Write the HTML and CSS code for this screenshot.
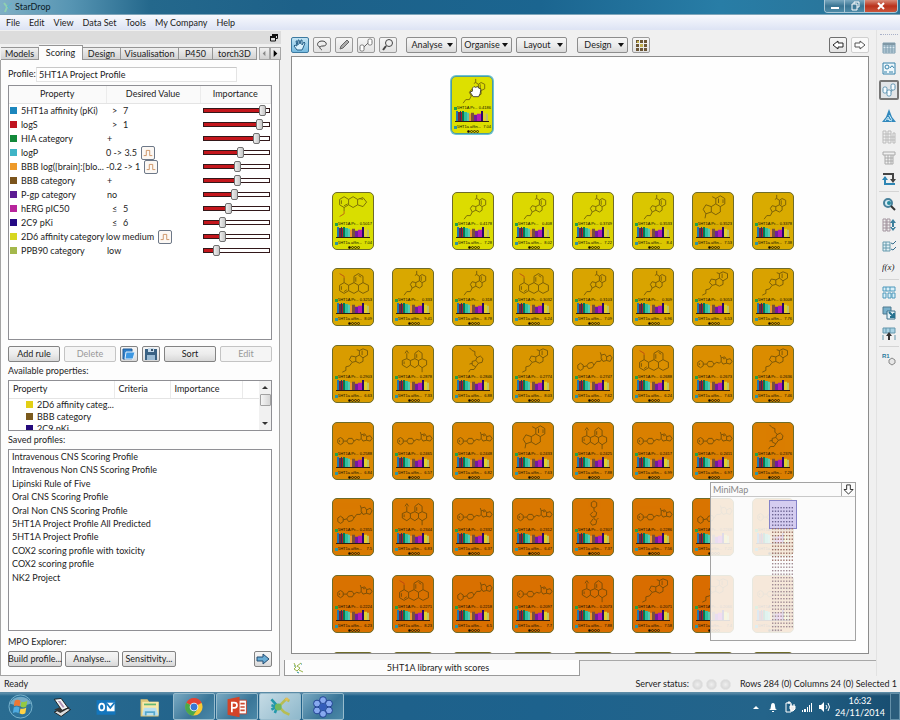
FILE: index.html
```html
<!DOCTYPE html>
<html lang="en">
<head>
<meta charset="utf-8">
<title>StarDrop</title>
<link rel="stylesheet" href="styles.css">
</head>
<body>
<svg class="defs" aria-hidden="true">
  <symbol id="mol-a" viewBox="0 0 42 30"><path d="M10 3l5 3v6l-5 3-5-3V6zM15 6l5-3 5 3v6l-5 3-5-3M25 6l6-2 4 5-4 5-6-2M7 7v4M10 13l4-2M27 5l4 1M10 15v4"/><path class="hot" d="M10 19v3l-5 3"/></symbol>
  <symbol id="mol-s" viewBox="0 0 42 30"><path d="M30 5l4 2v5l-4 2-3-2V7zM27 12l-4 2v4l4 2 3-2v-4M23 14l-4-1-2 3 2 4 4-2M29 7v5M27 7l-3-2V1M24 5l-2 1M19 20l-2 4-4 0-3 4"/></symbol>
  <symbol id="mol-c" viewBox="0 0 42 30"><path d="M31 2l5 2v5l-5 3-4-3V4zM27 9l-4 2v5l4 2 4-2v-4M23 11l-5-1-2 4 3 3 4-1M30 4v5M19 17l-3 4-4 1 0 4-4 2M27 4l-3-1"/></symbol>
  <symbol id="mol-m" viewBox="0 0 42 30"><path d="M28 2l5 3v6l-5 3-5-3V5zM23 11l-5 3v6l5 3 5-3v-6M18 14l-6-2-3 5 3 5 6-2M26 5v5M31 6v4M23 5l-4-2M12 22l-1 5"/></symbol>
  <symbol id="mol-b" viewBox="0 0 42 30"><path d="M10 14l5 3v6l-5 3-5-3v-6zM15 17l6-3 5 3v6l-5 3-6-3M26 17l5-3 6 3v6l-6 3-5-3M21 14V7l5-3 5 3v7M23 8v5M26 6l3 2M7 18v4M10 24l3-2M10 14V9"/><path class="hot" d="M10 9V7L5 4"/></symbol>
  <symbol id="mol-d" viewBox="0 0 42 30"><path d="M13 13l4 2v5l-4 3-5-3v-5zM17 15l5-2 4 2v5l-4 3-5-3M26 15l4-2 5 2v5l-5 3-4-3M22 13V7l4-3 4 3v6M24 8v4M10 16v3M13 13V7M11 7l2-3 2 3M30 23v5"/></symbol>
  <symbol id="mol-l" viewBox="0 0 42 30"><path d="M6 15l3 2v4l-3 2-3-2v-4zM9 19h4l2-3h4l2 3-2 3h-4l-2-3M21 19l3-2 3 1 2-2M29 12l4-1 2 3v4l-4 1-2-3zM35 14l4-1 2 3-2 3-4-1M29 12l-1-3M31 13l2 0M5 18v2"/></symbol>
  <symbol id="mol-u" viewBox="0 0 42 30"><path d="M6 18l3 2v4l-3 2-3-2v-4zM9 22l4-1 2-3 4-1 2 3-2 3-4 1-2-3M21 20l3-4 4 0 2-3M29 9l4-1 2 3v4l-4 1-2-3zM35 11l4-2 2 3-2 4-4-1M29 9l-1-3"/></symbol>
  <symbol id="mol-v" viewBox="0 0 42 30"><path d="M16 1l3 3 3 1v4l3 3M24 12l4-2 3 3-1 4-4 1-3-3zM23 15l-4 1v4l4 2 3-4M19 18l-3 1M23 22l-2 3-4 0-2 3"/></symbol>
  <symbol id="mol-w" viewBox="0 0 42 30"><path d="M18 3l3-2 3 2v4l-3 2-3-2zM21 9v3l3 2-1 4-4 1-2-3 3-3M21 19v2l3 2-1 4-4 1-2-3 3-4M24 22l2-2"/></symbol>
  <symbol id="chart" viewBox="0 0 34 12" preserveAspectRatio="none">
    <path fill="#1f78b0" d="M1 0h2v11H1z"/><path fill="#7c2634" d="M3 1h3v10H3z"/><path fill="#30345c" d="M5 0h1v11H5z"/><path fill="#b0142c" d="M6 1h1v10H6z"/><path fill="#087850" d="M7 0h2v11H7z"/><path fill="#30bea0" d="M9 1h3v10H9z"/><path fill="#58c7b0" d="M12 2h2v9h-2z"/><path fill="#eb9930" d="M14 3h2v8h-2z"/><path fill="#795238" d="M16 2h3v9h-3z"/><path fill="#701ba0" d="M19 4h3v7h-3z"/><path fill="#b31ab3" d="M22 3h4v8h-4z"/><path fill="#28086a" d="M26 0h2v11h-2z"/><path fill="#dfd02c" d="M28 2h3v9h-3z"/><path fill="#bac06c" d="M31 3h2v8h-2z"/><path fill="#301c10" d="M0 11h34v1H0z"/>
  </symbol>
  <symbol id="curve" viewBox="0 0 14 14"><path d="M2 10h3V4h4v6h3" fill="none" stroke="#c88a58"/></symbol>
</svg>

<div class="window">
  <header class="titlebar">
    <svg class="logo" viewBox="0 0 10 12"><path d="M1 2l3 4-2 5" stroke="#8fd0b0" fill="none" stroke-width="2"/><path d="M4 6l5-4M5 6l3 3" stroke="#5bb7d0" fill="none"/></svg>
    <span class="title">StarDrop</span>
    <div class="winbtns">
      <button aria-label="Minimise"><svg viewBox="0 0 12 10"><path d="M2 6h8v2H2z" fill="#fff"/></svg></button><button aria-label="Restore"><svg viewBox="0 0 12 10"><path d="M3 3h5v6H3zM5 3V1h5v5H8" fill="none" stroke="#fff"/></svg></button><button class="close" aria-label="Close"><svg viewBox="0 0 12 10"><path d="M3 2l6 6M9 2L3 8" stroke="#fff" stroke-width="2"/></svg></button>
    </div>
  </header>
  <nav class="menubar">
    <button>File</button><button>Edit</button><button>View</button><button>Data Set</button><button>Tools</button><button>My Company</button><button>Help</button>
  </nav>

  <div class="workspace">
    <aside class="sidebar">
      <div class="dockbar"><button aria-label="Undock"><svg viewBox="0 0 8 8"><path d="M2 0.500h5.500v4H6M0.500 3h5v4h-5z" fill="none" stroke="#111"/><path d="M2 0h6v2H2zM0 2h6v2H0z" fill="#111"/></svg></button></div>
      <div class="tabs">
        <button class="t-mod">Models</button><button class="t-sco active">Scoring</button><button class="t-des">Design</button><button class="t-vis">Visualisation</button><button class="t-p45">P450</button><button class="t-tor">torch3D</button><span class="rest"></span>
        <button class="nudge" aria-label="Previous tabs"><svg viewBox="0 0 10 12"><path d="M6 3L3 6l3 3z" fill="#888"/></svg></button><button class="nudge" aria-label="Next tabs"><svg viewBox="0 0 10 12"><path d="M3 2l4 4-4 4z" fill="#000"/></svg></button>
      </div>
      <div class="panel">
        <div class="profile"><label for="profile">Profile:</label><input id="profile" value="5HT1A Project Profile"></div>
        <div class="frame rules">
          <table>
            <thead><tr><th class="c-prop">Property</th><th class="c-val">Desired Value</th><th class="c-imp">Importance</th></tr></thead>
            <tbody id="rules"></tbody>
          </table>
        </div>
        <div class="actions">
          <button class="btn">Add rule</button><button class="btn" disabled>Delete</button>
          <button class="btn sq" aria-label="Open profile"><svg viewBox="0 0 16 14"><path d="M2 2h9v10H2z" fill="#2f7fc8" stroke="#205a96"/><path d="M5 5h9l-2 7H4z" fill="#3c97e2" stroke="#e7f2fb"/></svg></button>
          <button class="btn sq" aria-label="Save profile"><svg viewBox="0 0 16 14"><path d="M2 2h12v11H2z" fill="#3a6284"/><path d="M5 1h6v4H5z" fill="#c8dcec"/><path d="M4 8h8v5H4z" fill="#9bbbd4"/><path d="M8 2h2v2H8z" fill="#34506a"/></svg></button>
          <button class="btn">Sort</button><button class="btn" disabled>Edit</button>
        </div>
        <h2 class="avail-title">Available properties:</h2>
        <div class="frame avail">
          <table>
            <thead><tr><th class="a-prop">Property</th><th class="a-crit">Criteria</th><th class="a-imp">Importance</th><th></th></tr></thead>
            <tbody>
              <tr><td colspan="4"><i class="sw yellow"></i>2D6 affinity categ...</td></tr>
              <tr><td colspan="4"><i class="sw brown"></i>BBB category</td></tr>
              <tr><td colspan="4"><i class="sw navy"></i>2C9 pKi</td></tr>
            </tbody>
          </table>
          <div class="scroll"><svg viewBox="0 0 10 8"><path d="M2 5l3-3 3 3z" fill="#333"/></svg><i></i><svg class="down" viewBox="0 0 10 8"><path d="M2 3l3 3 3-3z" fill="#333"/></svg></div>
        </div>
        <h2 class="saved-title">Saved profiles:</h2>
        <ul class="frame saved">
          <li>Intravenous CNS Scoring Profile</li><li>Intravenous Non CNS Scoring Profile</li><li>Lipinski Rule of Five</li><li>Oral CNS Scoring Profile</li><li>Oral Non CNS Scoring Profile</li><li>5HT1A Project Profile All Predicted</li><li>5HT1A Project Profile</li><li>COX2 scoring profile with toxicity</li><li>COX2 scoring profile</li><li>NK2 Project</li>
        </ul>
        <h2 class="mpo-title">MPO Explorer:</h2>
        <div class="mpo">
          <button class="btn">Build profile...</button><button class="btn">Analyse...</button><button class="btn">Sensitivity...</button>
          <button class="btn sq go" aria-label="Run"><svg viewBox="0 0 16 14"><path d="M2 5h6V2l6 5-6 5V9H2z" fill="#69add6" stroke="#234c72"/></svg></button>
        </div>
      </div>
    </aside>

    <main class="main">
      <div class="toolbar">
        <button class="tool on" aria-label="Pan"><svg viewBox="0 0 16 14"><path d="M5 12L2 8l1-1 2 1-1-5h1l1 4V2h1l1 4 1-4h1v5l2-3 1 1-2 5-1 2z" fill="#d9f0fc" stroke="#28628a"/></svg></button>
        <button class="tool" aria-label="Lasso"><svg viewBox="0 0 16 14"><path d="M6 9C2 8 3 3 8 3s6 5 1 5-3 3-1 4" fill="none" stroke="#444"/></svg></button>
        <button class="tool" aria-label="Draw"><svg viewBox="0 0 16 14"><path d="M4 11l1-3 6-6 2 2-6 6z" fill="#aaa" stroke="#666"/></svg></button>
        <button class="tool" aria-label="Link"><svg viewBox="0 0 16 14"><path d="M6 9l4-4" stroke="#666"/><rect x="2" y="7" width="4" height="6" rx="1.500" fill="#fff" stroke="#777"/><rect x="10" y="1" width="4" height="6" rx="1.500" fill="#fff" stroke="#777"/></svg></button>
        <button class="tool" aria-label="Zoom"><svg viewBox="0 0 16 14"><circle cx="9" cy="5" r="3.500" fill="#eee" stroke="#444"/><path d="M6 8l-3 4" stroke="#444" stroke-width="2"/></svg></button>
        <button class="drop first">Analyse<i></i></button><button class="drop">Organise<i></i></button><button class="drop">Layout<i></i></button><button class="drop design">Design<i></i></button>
        <button class="tool" aria-label="Grid"><svg viewBox="0 0 16 14"><path d="M3 2h3v3H3zM7 2h3v3H7zM11 2h3v3h-3zM3 6h3v3H3zM11 6h3v3h-3zM3 10h3v3H3zM7 10h3v3H7zM11 10h3v3h-3z" fill="#6b5636"/><path d="M7 6h3v3H7zM4 3h2v2H4z" fill="#c2b04e"/></svg></button>
        <button class="tool back" aria-label="Back"><svg viewBox="0 0 16 14"><path d="M13 5H8V3L3 7l5 4V9h5z" fill="#fff" stroke="#222"/></svg></button>
        <button class="tool fwd" aria-label="Forward"><svg viewBox="0 0 16 14"><path d="M3 5h5V3l5 4-5 4V9H3z" fill="#fff" stroke="#555"/></svg></button>
      </div>
      <section class="canvas">
        <div class="picked" id="picked"></div>
        <div class="cards" id="cards"></div>
        <div class="minimap">
          <div class="mm-head"><span>MiniMap</span><button aria-label="Collapse"><svg viewBox="0 0 12 12"><path d="M4 1h4v5h3l-5 5-5-5h3z" fill="#fff" stroke="#222"/></svg></button></div>
          <div class="mm-body"><svg id="dots" class="mm-dots" viewBox="0 0 28 132"></svg></div>
        </div>
      </section>
      <div class="sheets"><button class="sheet"><svg viewBox="0 0 14 14"><path d="M3 2l2 4-2 2 3 2 3-3-3-2 4-3M8 9l4 2" fill="none" stroke="#9ab54a"/><path d="M6 11l2 1M10 3h1M3 5h1" stroke="#2b8f9a"/></svg><span>5HT1A library with scores</span></button><div class="sheet-rest"></div></div>
    </main>
    <nav class="rail" id="rail" aria-label="Views"></nav>
  </div>

  <footer class="status"><span>Ready</span><span class="server">Server status:</span><i></i><i></i><i></i><span class="count">Rows 284 (0) Columns 24 (0) Selected 1</span></footer>

  <div class="taskbar">
    <button class="start" aria-label="Start"><svg viewBox="0 0 28 28"><circle cx="14" cy="14" r="12" fill="#2d739b" stroke="#79b3cc"/><path d="M3 11a12 12 0 0 1 22 0q-11 5-22 0" fill="#73aac5"/><path d="M8 8q3-2 6 0l-1 6q-3-2-6 0z" fill="#ee7734"/><path d="M15 9q3 1 6-1l-1 6q-3 2-6 0z" fill="#94c942"/><path d="M7 15q3-2 6 0l-1 6q-3-2-6 0z" fill="#4fabe0"/><path d="M14 16q3 1 6-1l-1 6q-3 2-6 0z" fill="#ffd346"/></svg></button>
    <button aria-label="Scanner"><svg viewBox="0 0 28 28"><path d="M5 20l12-6 7 3-11 8z" fill="#ddd" stroke="#111"/><path d="M5 17l12-5 6 3-11 6z" fill="#363636"/><path d="M5 5l8-1 8 11-7 3z" fill="#f4f4f4" stroke="#111"/><path d="M9 7l3 0 5 7-2 1z" fill="#b294b6"/></svg></button>
    <button aria-label="Outlook"><svg viewBox="0 0 28 28"><rect x="3" y="6" width="22" height="17" fill="#1476bd"/><ellipse cx="9" cy="14" rx="3" ry="4" fill="none" stroke="#fff" stroke-width="2"/><path d="M15 9h9v10h-9z" fill="#fff"/><path d="M15 10l4 5 5-6" fill="none" stroke="#1476bd" stroke-width="2"/></svg></button>
    <button aria-label="Explorer"><svg viewBox="0 0 28 28"><path d="M3 5h8l2 3h11v17H3z" fill="#dec578"/><path d="M5 8h19v15H5z" fill="#f8e8a7"/><path d="M7 15h14l3 9H5z" fill="#b8dff0"/><path d="M9 24v-4h10v4" fill="none" stroke="#55a8cd" stroke-width="2"/><path d="M7 11h14" stroke="#65b774" stroke-width="2"/></svg></button>
    <button class="run" aria-label="Chrome"><svg viewBox="0 0 28 28"><circle cx="14" cy="14" r="10" fill="#f8ca35"/><path d="M14 14L5 9a10 10 0 0 1 18 0z" fill="#e34133"/><path d="M14 14l-9-5a10 10 0 0 0 8 15l5-7z" fill="#4aa84a"/><circle cx="14" cy="14" r="5" fill="#fff"/><circle cx="14" cy="14" r="4" fill="#3977d2"/></svg></button>
    <button class="run" aria-label="PowerPoint"><svg viewBox="0 0 28 28"><path d="M15 6h10v16H15z" fill="#fff" stroke="#c43d28"/><path d="M18 10h5M18 14h5M18 18h5" stroke="#d04a31" stroke-width="2"/><path d="M3 5l14-3v24L3 23z" fill="#d34428"/><path d="M8 20V9h3q3 0 3 3t-3 3H8" fill="none" stroke="#fff" stroke-width="2"/></svg></button>
    <button class="run lit" aria-label="StarDrop"><svg viewBox="0 0 28 28"><path d="M4 5l7 8-3 8M11 13l-7 4M4 12l7 2" stroke="#2298ab" stroke-width="3" fill="none"/><path d="M13 13l8-8 4 2M14 15l5 5 6 3" stroke="#b7bd52" stroke-width="3" fill="none"/><circle cx="12" cy="14" r="4" fill="#72b85e"/><circle cx="22" cy="5" r="2" fill="#e2bd5a"/></svg></button>
    <button class="run" aria-label="Flower"><svg viewBox="0 0 28 28"><g fill="#87a9ef" stroke="#17378c"><circle cx="14" cy="6" r="4"/><circle cx="21" cy="10" r="4"/><circle cx="21" cy="18" r="4"/><circle cx="14" cy="22" r="4"/><circle cx="7" cy="18" r="4"/><circle cx="7" cy="10" r="4"/></g><circle cx="14" cy="14" r="4" fill="#345dbb"/></svg></button>
    <div class="tray">
      <svg viewBox="0 0 12 12"><path d="M3 8l3-3 3 3z" fill="#fff"/></svg>
      <svg viewBox="0 0 12 12"><path d="M2 9q2-1 2-4 0-3 2-3t2 3q0 3 2 4zM5 10h2v1H5z" fill="#fff"/></svg>
      <svg viewBox="0 0 12 12"><path d="M2 2h5v9H2zM4 1h2v1H4z" fill="none" stroke="#fff"/><path d="M6 5h5v3L9 10H7V8H6zM7 3v2M10 3v2" fill="#eee" stroke="#fff"/></svg>
      <svg viewBox="0 0 12 12"><path d="M1 9h1v2H1zM3 8h2v3H3zM6 6h1v5H6zM8 4h1v7H8zM10 2h1v9h-1z" fill="#fff"/></svg>
      <svg viewBox="0 0 12 12"><path d="M1 4h2l3-3v10L3 8H1z" fill="#fff"/><path d="M8 4q2 2 0 4M10 2q3 4 0 8" fill="none" stroke="#fff"/></svg>
      <div class="clock"><span>16:32</span><span>24/11/2014</span></div>
      <button class="peek" aria-label="Show desktop"></button>
    </div>
  </div>
</div>
<script src="app.js"></script>
</body>
</html>
```
FILE: styles.css
```css
* { box-sizing: border-box; }
body { margin: 0; font-family: Lato, "Open Sans", sans-serif; font-size: 9px; line-height: 12px; color: #1c1c1c; background: #f0f0f0; }
button, input { font: inherit; color: inherit; margin: 0; padding: 0; border: 0; background: none; border-radius: 0; }
button { display: flex; align-items: center; justify-content: center; white-space: nowrap; }
svg { display: block; flex: none; }
h2 { margin: 0; font-size: 9px; font-weight: 400; }
.defs { position: absolute; width: 0; height: 0; }
.window { display: flex; flex-direction: column; height: 100vh; overflow: hidden; }

.titlebar { display: flex; align-items: center; height: 15px; flex: none; padding-left: 3px; background: linear-gradient(90deg, #7fb0c6 0, #5795b3 70px, #24688c 150px, #1d6189 300px, #1b6590 60%, #287da6 80%, #2a7296 100%); border-bottom: 1px solid #7fa6bb; }
.logo { width: 10px; height: 12px; }
.title { margin-left: 2px; color: #0c1c28; }
.winbtns { display: flex; align-self: flex-start; margin-left: auto; margin-right: 2px; border: 1px solid #a9c7d6; border-top: 0; border-radius: 0 0 4px 4px; overflow: hidden; }
.winbtns button { width: 20px; height: 12px; background: linear-gradient(#7ba9c0, #3a7593 50%, #4e8ba8); border-right: 1px solid #a9c7d6; }
.winbtns .close { width: 32px; border: 0; background: linear-gradient(#d98b78, #b9321c 50%, #cb563c); }
.winbtns svg { width: 12px; height: 10px; }
.menubar { display: flex; align-items: center; gap: 9px; height: 15px; flex: none; padding-left: 6px; background: linear-gradient(#f7f9fd, #dde3f4); }

.workspace { display: flex; flex: 1; min-height: 0; }
.sidebar { display: flex; flex-direction: column; width: 281px; flex: none; }
.dockbar { height: 13px; margin-top: 1px; flex: none; background: #dcdcdc; display: flex; align-items: center; justify-content: flex-end; padding-right: 3px; }
.dockbar svg { width: 8px; height: 8px; }
.tabs { display: flex; align-items: flex-end; height: 16px; flex: none; padding-left: 1px; }
.tabs button { height: 13px; background: linear-gradient(#f0f0f0, #d2d2d2); border: 1px solid #959595; border-left-width: 0; }
.tabs .active { height: 15px; background: #fdfdfd; border-bottom: 0; }
.tabs .t-mod { width: 38px; }
.tabs .t-sco { width: 44px; }
.tabs .t-des { width: 38px; }
.tabs .t-vis { width: 58px; }
.tabs .t-p45 { width: 34px; }
.tabs .t-tor { width: 44px; }
.rest { flex: 1; }
.tabs .nudge { width: 11px; border: 1px solid #a6a6a6; }
.nudge svg { width: 9px; height: 11px; }
.panel { flex: 1; min-height: 0; display: flex; flex-direction: column; margin-right: 1px; padding: 6px 7px 8px 7px; background: #fdfdfd; border: 1px solid #a4a4a4; border-top: 0; }
.profile { display: flex; align-items: center; height: 16px; flex: none; }
.profile label { width: 28px; }
.profile input { width: 201px; height: 15px; padding-left: 2px; border: 1px solid #e4e4e4; border-top-color: #c8c8c8; background: #fff; }
.frame { border: 1px solid #8f8f94; background: #fff; }
table { border-collapse: collapse; table-layout: fixed; width: 100%; }
th { font-weight: 400; padding: 0; }
td { padding: 0; white-space: nowrap; }
.rules { height: 255px; flex: none; margin-top: 3px; overflow: hidden; }
.rules th { height: 17px; background: #fafafa; border-right: 1px solid #ececec; border-bottom: 1px solid #e4e4e4; }
.rules td { height: 14px; line-height: 13px; }
.rules .c-prop { width: 97px; }
.rules .c-val { width: 94px; }
.prop, .val { display: flex; align-items: center; height: 14px; }
.sw { display: inline-block; width: 7px; height: 7px; flex: none; }
.prop .sw { margin: 0 4px 0 1px; }
.val.word { padding-left: 1px; }
.val .op { width: 16px; padding-left: 5px; }
.val button { width: 14px; height: 14px; margin-left: 4px; border: 1px solid #6d7888; border-radius: 2px; background: #fcf8f4; }
.val button svg { width: 12px; height: 12px; }
input[type=range] { appearance: none; -webkit-appearance: none; display: block; width: 67px; height: 14px; margin-left: 3px; }
input[type=range]::-webkit-slider-runnable-track { height: 5px; border: 1px solid #33181a; background: linear-gradient(90deg, #c4161c var(--v), #fff var(--v)); }
input[type=range]::-webkit-slider-thumb { -webkit-appearance: none; width: 7px; height: 11px; margin-top: -4px; border: 1px solid #727272; border-radius: 2px; background: linear-gradient(90deg, #eee, #c6c6c6); }
.actions { display: flex; justify-content: space-between; margin-top: 6px; flex: none; }
.btn { width: 52px; height: 16px; border: 1px solid #838383; border-radius: 2px; background: linear-gradient(#f5f5f5, #ececec 50%, #d8d8d8); }
.btn:disabled { color: #999; border-color: #c4c4c4; background: #f5f5f5; }
.btn.sq { width: 18px; }
.btn.sq svg { width: 16px; height: 14px; }
.avail-title { margin-top: 3px; }
.avail { position: relative; height: 51px; flex: none; margin-top: 3px; overflow: hidden; }
.avail th { height: 17px; text-align: left; padding-left: 4px; border-right: 1px solid #eaeaea; border-bottom: 1px solid #e4e4e4; }
.a-prop { width: 105px; }
.a-crit { width: 56px; }
.a-imp { width: 72px; }
.avail td { height: 12px; line-height: 12px; padding-left: 17px; }
.avail .sw { margin-right: 4px; }
.yellow { background: #e2cf15; }
.brown { background: #7b5a1d; }
.navy { background: #250a7c; }
.scroll { position: absolute; right: 0; top: 0; bottom: 0; width: 12px; display: flex; flex-direction: column; align-items: center; background: #f1f1f1; padding: 3px 0; }
.scroll svg { width: 10px; height: 8px; }
.scroll i { width: 11px; height: 12px; margin-top: 2px; border: 1px solid #a2a2a2; border-radius: 1px; background: linear-gradient(90deg, #f5f5f5, #d6d6d6); }
.scroll .down { margin-top: auto; }
.saved-title { margin-top: 3px; }
.saved { flex: 1; min-height: 0; margin: 3px 0 0; padding: 0 3px; list-style: none; display: grid; grid-auto-rows: 13px 14px 13px 14px 13px; align-items: center; align-content: start; }
.mpo-title { margin-top: 5px; }
.mpo { display: flex; gap: 3px; margin-top: 3px; flex: none; }
.mpo .btn { width: 54px; }
.mpo .go { width: 18px; margin-left: auto; }

.main { flex: 1; min-width: 0; display: flex; flex-direction: column; padding-left: 3px; }
.toolbar { display: flex; align-items: center; gap: 4px; height: 26px; flex: none; padding: 4px 7px 0; }
.tool { width: 18px; height: 16px; border: 1px solid #9a9a9a; border-radius: 2px; background: linear-gradient(#f6f6f6, #e2e2e2); }
.tool svg { width: 16px; height: 14px; }
.tool.on { border-color: #3d7aa0; background: linear-gradient(#c3e4f4, #77bbe0); }
.tool.back { margin-left: auto; border-color: #6f6f6f; }
.tool.fwd { background: #fafafa; border-color: #cfcfcf; }
.drop { position: relative; width: 51px; height: 16px; padding-right: 9px; border: 1px solid #8d8d8d; border-radius: 2px; background: linear-gradient(#f6f6f6, #ececec 50%, #dadada); }
.drop i { position: absolute; right: 3px; top: 5px; border: 3px solid transparent; border-top: 4px solid #111; border-bottom: 0; }
.drop.first { margin-left: 5px; }
.drop.design { margin-left: 6px; }
.canvas { position: relative; flex: 1; min-height: 0; overflow: hidden; margin: 0 7px; padding: 19px 0 0 40px; background: #fefefe; border: 1px solid #8c8c8c; }
.picked { margin-left: 119px; height: 116px; }
.cards { display: grid; grid-template-columns: repeat(8, 42px); column-gap: 18px; grid-auto-rows: 76px 77px 77px; }
.card { width: 42px; height: 58px; padding: 1px 1px 0 2px; border: 1px solid #6e6c2a; border-radius: 5px; overflow: hidden; background: #d98400; }
.picked .card { border-color: #4f9aa0; box-shadow: 0 0 0 1px #6cc3d2; }
.mol { width: 38px; height: 27px; fill: none; stroke: #50400c; stroke-width: 1; opacity: .75; }
.hot { stroke: #b03418; }
.line { display: flex; align-items: center; height: 6px; font: 4px/6px "Liberation Sans", sans-serif; color: #0c0a04; white-space: nowrap; }
.line i { flex: none; width: 3px; height: 3px; background: #26a048; }
.line.aff i { background: #2d94a2; }
.line b { font-weight: 400; margin-left: auto; }
.bars { width: 34px; height: 11px; margin: 0 0 2px 1px; }
.pips { display: flex; justify-content: center; height: 3px; }
.pips i { width: 3px; height: 3px; border: 1px solid #3b2a08; border-radius: 50%; }
.pips i:first-child { background: #150a02; }
.hand { position: absolute; left: 177px; top: 28px; width: 13px; height: 14px; }
.minimap { position: absolute; right: 12px; bottom: 12px; width: 146px; height: 159px; border: 1px solid #a3a3a3; background: rgba(250, 250, 250, .87); }
.mm-head { display: flex; align-items: center; height: 14px; padding-left: 2px; color: #888; border-bottom: 1px solid #c8c8c8; }
.mm-head button { margin-left: auto; width: 14px; height: 13px; border-left: 1px solid #a8a8a8; }
.mm-head svg { width: 11px; height: 11px; }
.mm-body { display: flex; justify-content: center; padding: 3px 0 0 0; }
.mm-dots { width: 28px; height: 132px; }
.sheets { display: flex; height: 22px; flex: none; padding-top: 6px; }
.sheet { width: 296px; height: 16px; padding-left: 6px; background: #fdfdfd; border: 1px solid #9a9a9a; border-top: 0; }
.sheet svg { width: 14px; height: 14px; }
.sheet span { flex: 1; text-align: center; padding-right: 8px; }
.sheet-rest { flex: 1; border-top: 1px solid #a8a8a8; }
.rail { width: 24px; flex: none; display: flex; flex-direction: column; align-items: center; gap: 1px; padding-top: 4px; border-left: 1px solid #e2e2e2; }
.rail::before { content: ""; width: 18px; height: 2px; border-top: 1px dotted #a8b0c8; }
.rail button { width: 20px; height: 20px; border-radius: 2px; }
.rail button.on { border: 2px solid #777; background: #e2e5e8; }
.rail svg { width: 14px; height: 14px; }
.rail hr { width: 20px; height: 2px; margin: 1px 0 0; border: 0; border-top: 1px solid #d4d4d4; }
.rail hr.blank { border-color: transparent; height: 3px; }

.status { display: flex; align-items: center; gap: 3px; height: 16px; flex: none; padding: 0 3px 0 4px; }
.server { margin-left: auto; }
.status i { width: 11px; height: 11px; border-radius: 50%; background: radial-gradient(#efefef, #cfcfcf); border: 1px solid #e2e2e2; }
.count { margin-left: 6px; }
.taskbar { display: flex; align-items: stretch; height: 28px; flex: none; background: linear-gradient(rgba(255,255,255,.25), transparent 3px), linear-gradient(90deg, #2a6c91, #1f6089 30%, #1d628d 60%, #24648a 85%, #174d70); border-top: 1px solid #5a8aa5; }
.taskbar button { width: 44px; }
.taskbar .start { width: 40px; }
.taskbar svg { width: 24px; height: 24px; }
.start svg { width: 27px; height: 27px; }
.taskbar .run { width: 42px; margin-left: 1px; border: 1px solid #98bccd; border-radius: 2px; background: linear-gradient(135deg, #79a9c2, #3a7698 60%, #4b88a8); }
.taskbar .lit { background: linear-gradient(135deg, #c5dbe5, #8eb8cb); }
.taskbar .tray { display: flex; align-items: center; gap: 5px; margin-left: auto; color: #fff; }
.taskbar .tray svg { width: 12px; height: 12px; }
.clock { display: flex; flex-direction: column; align-items: center; width: 50px; }
.taskbar .peek { width: 10px; height: 27px; border: 1px solid #6490a8; background: #2b5d7c; }
```
FILE: app.js
```js
const rules = [
  ["#1c86bd", "5HT1a affinity (pKi)", [">", "7"], 0, 94],
  ["#c01420", "logS", [">", "1"], 0, 89],
  ["#12893a", "HIA category", "+", 0, 84],
  ["#3fb4c6", "logP", "0 -> 3.5", 1, 57],
  ["#ee9a2a", "BBB log([brain]:[blo...", "-0.2 -> 1", 1, 51],
  ["#7b541c", "BBB category", "+", 0, 51],
  ["#5c1b92", "P-gp category", "no", 0, 47],
  ["#b8249c", "hERG pIC50", ["≤", "5"], 0, 36],
  ["#250a84", "2C9 pKi", ["≤", "6"], 0, 26],
  ["#d7d720", "2D6 affinity category", "low medium", 1, 26],
  ["#a4b84c", "PPB90 category", "low", 0, 16]
];
document.getElementById("rules").innerHTML = rules.map(([color, name, value, curve, level]) => {
  const text = Array.isArray(value) ? `<span class="op">${value[0]}</span>${value[1]}` : value;
  const button = curve ? `<button aria-label="Edit ${name} curve"><svg><use href="#curve"/></svg></button>` : "";
  return `<tr><td><div class="prop"><i class="sw" style="background:${color}"></i>${name}</div></td>
    <td><div class="val${curve ? "" : " word"}">${text}${button}</div></td>
    <td><input type="range" value="${level}" style="--v:${level}%" aria-label="${name} importance"></td></tr>`;
}).join("");

const card = ([mol, color, score, affinity]) => mol === "-" ? "<span></span>" :
  mol === "edge" ? `<article class="card" style="background:${color}"></article>` :
  `<article class="card" style="background:${color}"><svg class="mol"><use href="#mol-${mol}"/></svg>
  <div class="line"><i></i>5HT1A Pr...<b>0${score}</b></div><svg class="bars"><use href="#chart"/></svg>
  <div class="line aff"><i></i>5HT1a affin...<b>${affinity}</b></div><div class="pips"><i></i><i></i><i></i><i></i></div></article>`;

const rows = [
  [["a","#d9de00",".5017","7.04"],["-"],["s","#dcdc00",".4178","7.28"],["s","#dcd800",".408","8.02"],["s","#dcd200",".3749","7.22"],["s","#dac600",".3533","8.4"],["m","#d9ab00",".3523","7.53"],["s","#d9ab00",".3378","7.38"]],
  [["b","#d9a800",".3253","8.09"],["s","#d9a800",".333","9.41"],["s","#d9a600",".318","8.78"],["b","#d9a600",".3032","6.24"],["s","#d9a400",".3103","7.09"],["s","#d9a400",".309","6.96"],["c","#d9a200",".3053","6.53"],["c","#d9a200",".3008","7.76"]],
  [["c","#d99c00",".2903","6.63"],["d","#d99a00",".2878","7.33"],["v","#d99800",".2846","6.88"],["c","#d99600",".2774","8.03"],["u","#db9000",".2747","7.62"],["b","#db9000",".2688","6.24"],["l","#db8e00",".2673","7.63"],["c","#db8c00",".2636","7.46"]],
  [["l","#da8800",".2588","6.84"],["l","#da8600",".2465","6.57"],["l","#da8400",".2448","6.82"],["m","#da8200",".2433","7.63"],["d","#da8000",".2425","7.88"],["l","#da8000",".2417","6.99"],["l","#da7e00",".2411","6.97"],["v","#da7e00",".2376","7.28"]],
  [["u","#d97a00",".2355","7.5"],["d","#d97900",".2344","6.83"],["l","#d97800",".2332","6.37"],["l","#d97700",".2312","6.47"],["w","#d97600",".2307","7.37"],["l","#d97500",".2286","7.56"],["u","#d97400",".2268","7.22"],["l","#d97400",".2255","6.9"]],
  [["l","#d97200",".2224","6.23"],["b","#d97200",".2271","8.23"],["u","#d97000",".2218","6.5"],["l","#d97000",".2097","7.7"],["d","#d96e00",".2073","7.88"],["c","#d96e00",".2071","7.58"],["c","#d96c00",".2066","7.4"],["l","#d96c00",".2041","7.1"]],
  Array.from({ length: 8 }, () => ["edge", "#c86408"])
];
document.getElementById("cards").innerHTML = rows.flat().map(card).join("");
document.getElementById("picked").innerHTML = card(["s", "#dde000", ".4186", "7.04"]) +
  `<svg class="hand" viewBox="0 0 16 18"><path d="M5 15L1 9l3-1V4l2-2 2 1 3-1 1 2 3 1-1 6-2 4z" fill="#fff" stroke="#222"/></svg>`;

let dots = '<rect x=".5" y=".5" width="27" height="28" fill="#d5cdf0" stroke="#8482c8"/>';
for (let r = 0; r < 36; r++) {
  for (let c = 0; c < (r === 35 ? 4 : 8); c++) {
    const color = r < 6 ? "#6c6392" : r < 16 ? "#9a6e64" : "#a08a92";
    dots += `<rect x="${3 + c * 2.8}" y="${7 + r * 3.5}" width="1.4" height="1.4" fill="${color}"/>`;
  }
}
document.getElementById("dots").innerHTML = dots;

const grid = '<path d="M1 2h12v10H1zM1 5h12M4 2v10M7 2v10M10 2v10M1 8h12M1 10h12"';
const railIcons = [
  ["Table", `${grid} fill="#dceaf2" stroke="#7c9cae"/><path d="M1 2h12v2H1z" fill="#7f98a6"/>`],
  ["Plots", '<path d="M1 1h12v11H1z" fill="#eef7fb" stroke="#3682aa"/><circle cx="5" cy="5" r="2" fill="none" stroke="#3682aa"/><path d="M8 6q2-4 4 0M2 10h3M7 10h4" fill="none" stroke="#3682aa"/>'],
  ["Cards", '<path d="M8 10l3-4" stroke="#4c87a7"/><g fill="#f6fbff" stroke="#5b93b1"><rect x="1" y="4" width="4" height="6" rx="1.500"/><rect x="5" y="7" width="4" height="6" rx="1.500"/><rect x="9" y="1" width="4" height="6" rx="1.500"/></g>', "on"],
  null,
  ["Distribution", '<path d="M7 0L4 8l-4 5h14l-4-5z" fill="#3289bd"/><path d="M3 12l3-4 2 4M7 6l3 5M5 10l5 2" stroke="#c9e9f6" fill="none"/>'],
  ["Columns", '<path d="M1 1h3v12H1zM6 1h3v12H6zM11 3h2v10h-2zM1 4h8M1 7h12M1 10h12" fill="none" stroke="#bbb"/>'],
  ["Header", '<path d="M1 1h12v3H1zM3 4v9h8V4M6 4v9M9 4v9M3 7h8M3 10h8" fill="none" stroke="#aaa"/>'],
  ["Transpose", '<path d="M1 2h10v6" fill="none" stroke="#444" stroke-width="2"/><path d="M3 5v7h10" fill="none" stroke="#2e86b4" stroke-width="2"/><path d="M0 8l3-4 3 4z" fill="#2e86b4"/><path d="M8 7h6l-3 4z" fill="#444"/>'],
  0,
  ["Find", '<circle cx="6" cy="6" r="4" fill="#d7edf5" stroke="#48819b" stroke-width="2"/><circle cx="7" cy="6" r="2" fill="#278a9e"/><path d="M9 9l4 4" stroke="#333" stroke-width="2"/>'],
  ["Sort", '<path d="M1 1h3v12H1zM5 1h3v12H5zM1 4h7M1 7h7M1 10h7" fill="none" stroke="#a2949e"/><path d="M11 1l3 4H8zM11 13l3-4H8zM10 4h2v6h-2z" fill="#3c7f9c"/>'],
  ["Check", '<path d="M1 3h7v9H1zM1 6h7M1 9h7M4 3v9" fill="#e2f1f6" stroke="#679aad"/><path d="M9 4l2 1 3-3M9 10l2 1 3-3" fill="none" stroke="#336c8c"/>'],
  ["Function", '<text x="0" y="10" font-family="Liberation Serif" font-style="italic" font-size="9" fill="#222">f(x)</text>'],
  0,
  ["Merge", '<path d="M1 2h12v4H1zM1 8h3v5H1zM6 8h3v5H6zM10 8h3v5h-3zM4 2v4M8 2v4" fill="#d9eff8" stroke="#4d98bb"/>'],
  ["Copy", '<path d="M1 1h8v7H1z" fill="#78b0cb" stroke="#507b90"/><path d="M5 5h8v8H5z" fill="#e4f2f7" stroke="#3d718a"/><path d="M7 6l5 5M8 11h4V7" stroke="#26718f" fill="none" stroke-width="2"/>'],
  ["Split", '<path d="M1 1h12v5H1zM4 1v5M8 1v5M1 8v5M13 8v5" fill="#a8d2e4" stroke="#6497ac"/><path d="M7 5l3 4H8v4H6V9H4z" fill="#333"/>'],
  0,
  ["R-groups", '<text x="0" y="6" font-family="Liberation Sans" font-weight="bold" font-size="6" fill="#2b7b9d">R1</text><path d="M7 8l3-2 3 2v3l-3 2-3-2z" fill="#e7e7e7" stroke="#888"/>']
];
document.getElementById("rail").innerHTML = railIcons.map(icon => icon === null ? '<hr class="blank">' : icon === 0 ? "<hr>" :
  `<button class="${icon[2] || ""}" aria-label="${icon[0]}"><svg viewBox="0 0 14 14">${icon[1]}</svg></button>`).join("");
```
